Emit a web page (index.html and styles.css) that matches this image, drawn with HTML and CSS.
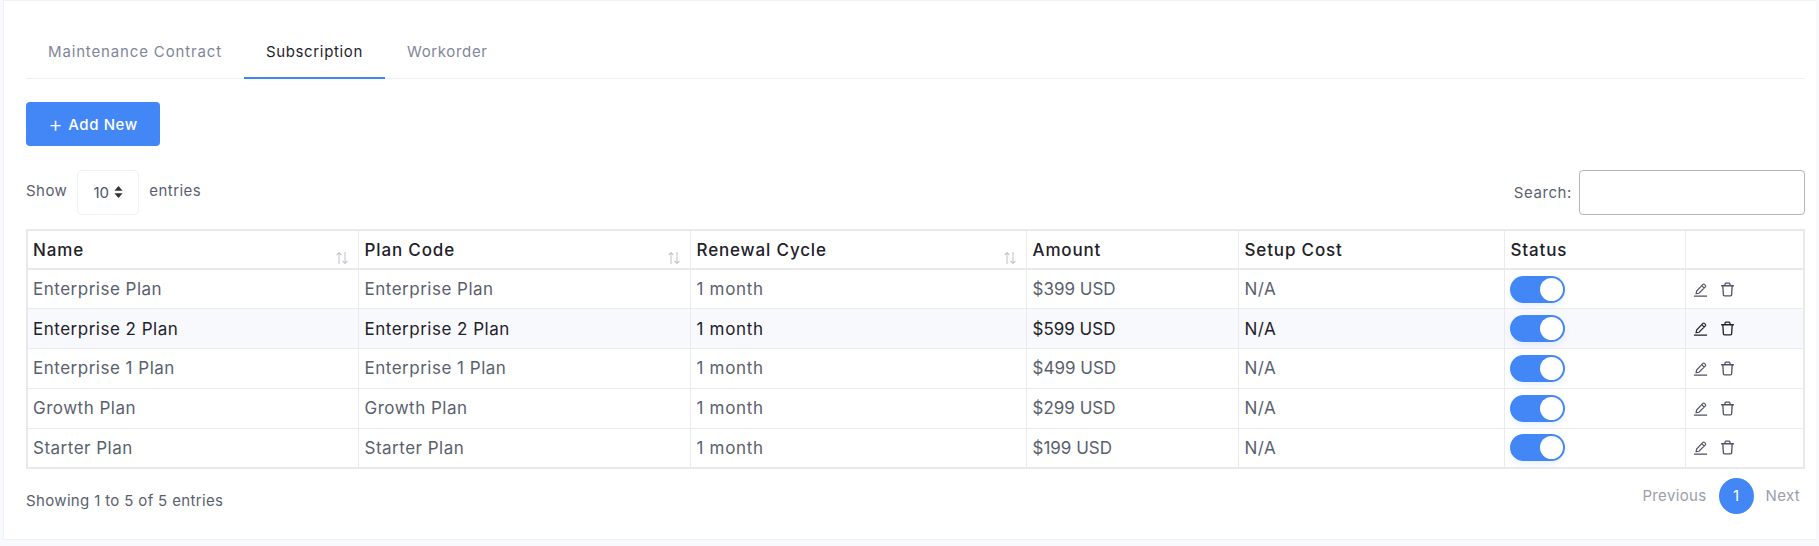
FILE: index.html
```html
<!DOCTYPE html>
<html lang="en">
<head>
<meta charset="utf-8">
<title>Subscription</title>
<link rel="stylesheet" href="styles.css">
</head>
<body>
<svg class="defs" width="0" height="0" aria-hidden="true">
  <symbol id="edit" viewBox="0 0 16 16"><path d="M1 15h14M3.2 12.6l.7-3L10.6 2.6a1.1 1.1 0 0 1 1.6 0l1 1a1.1 1.1 0 0 1 0 1.6L6.3 12l-3.1.6zM9.4 3.9l2.6 2.6" fill="none" stroke="currentColor" stroke-width="1.2" stroke-linejoin="round"/></symbol>
  <symbol id="trash" viewBox="0 0 16 16"><path d="M1.2 4h13.6M3 4l.6 9.6c0 .8.5 1.2 1.2 1.2h6.4c.7 0 1.2-.4 1.2-1.2L13 4M5 4l.6-2.2c.1-.4.4-.6.8-.6h3.2c.4 0 .7.2.8.6L11 4" fill="none" stroke="currentColor" stroke-width="1.4" stroke-linejoin="round"/></symbol>
  <symbol id="sort" viewBox="0 0 14 14"><path d="M4 13V1.5M1.6 4L4 1.5 6.4 4M10 1v11.5M7.6 10l2.4 2.5 2.4-2.5" fill="none" stroke="currentColor" stroke-width="1.1"/></symbol>
</svg>
<main class="card">
  <nav class="tabs">
    <a class="tab">Maintenance Contract</a>
    <a class="tab tab-active">Subscription</a>
    <a class="tab">Workorder</a>
  </nav>
  <button class="add-btn"><span class="plus">+</span>Add New</button>
  <div class="controls">
    <div class="length">
      <span class="length-label">Show</span>
      <span class="select">10
        <svg class="updown" viewBox="0 0 9 12"><path d="M4.5 0L8.6 4.7H.4zM4.5 12L.4 7.3h8.2z" fill="currentColor"/></svg>
      </span>
      <span class="length-label">entries</span>
    </div>
    <label class="search">Search:<input class="search-input" type="text"></label>
  </div>
  <table class="grid">
    <colgroup>
      <col class="c1"><col class="c2"><col class="c3"><col class="c4"><col class="c5"><col class="c6"><col class="c7">
    </colgroup>
    <thead>
      <tr>
        <th>Name<svg class="sort"><use href="#sort"/></svg></th>
        <th>Plan Code<svg class="sort"><use href="#sort"/></svg></th>
        <th>Renewal Cycle<svg class="sort"><use href="#sort"/></svg></th>
        <th>Amount</th>
        <th>Setup Cost</th>
        <th>Status</th>
        <th></th>
      </tr>
    </thead>
    <tbody>
      <tr>
        <td>Enterprise Plan</td><td>Enterprise Plan</td><td>1 month</td><td>$399 USD</td><td>N/A</td>
        <td><span class="toggle"></span></td>
        <td class="actions"><svg class="ic"><use href="#edit"/></svg><svg class="ic"><use href="#trash"/></svg></td>
      </tr>
      <tr class="hover">
        <td>Enterprise 2 Plan</td><td>Enterprise 2 Plan</td><td>1 month</td><td>$599 USD</td><td>N/A</td>
        <td><span class="toggle"></span></td>
        <td class="actions"><svg class="ic"><use href="#edit"/></svg><svg class="ic"><use href="#trash"/></svg></td>
      </tr>
      <tr>
        <td>Enterprise 1 Plan</td><td>Enterprise 1 Plan</td><td>1 month</td><td>$499 USD</td><td>N/A</td>
        <td><span class="toggle"></span></td>
        <td class="actions"><svg class="ic"><use href="#edit"/></svg><svg class="ic"><use href="#trash"/></svg></td>
      </tr>
      <tr>
        <td>Growth Plan</td><td>Growth Plan</td><td>1 month</td><td>$299 USD</td><td>N/A</td>
        <td><span class="toggle"></span></td>
        <td class="actions"><svg class="ic"><use href="#edit"/></svg><svg class="ic"><use href="#trash"/></svg></td>
      </tr>
      <tr>
        <td>Starter Plan</td><td>Starter Plan</td><td>1 month</td><td>$199 USD</td><td>N/A</td>
        <td><span class="toggle"></span></td>
        <td class="actions"><svg class="ic"><use href="#edit"/></svg><svg class="ic"><use href="#trash"/></svg></td>
      </tr>
    </tbody>
  </table>
  <div class="footer">
    <span class="info">Showing 1 to 5 of 5 entries</span>
    <div class="pager">
      <a class="page-link">Previous</a>
      <a class="page-num">1</a>
      <a class="page-link">Next</a>
    </div>
  </div>
</main>
</body>
</html>
```
FILE: styles.css
```css
* { box-sizing: border-box; }
html, body { margin: 0; height: 100%; }
body {
  background: #f7f9fd;
  font-family: "Inter", "Open Sans", sans-serif;
  font-size: 15px;
  letter-spacing: .6px;
  color: #5a5f6e;
  overflow: hidden;
  padding-right: 3px;
}
.defs { position: absolute; }
.card {
  margin-left: 3px;
  height: 540px;
  background: #fff;
  border: 1px solid #eef1f6;
  border-width: 1px 0 1px 1px;
  padding: 27px 11px 0 22px;
}
.tabs {
  display: flex;
  height: 51px;
  border-bottom: 1px solid #edf1f7;
}
.tab {
  padding: 14px 22px 0;
  height: 51px;
  color: #7f8699;
  letter-spacing: .85px;
}
.tab + .tab { letter-spacing: .65px; }
.tab-active {
  color: #1f2430;
  border-bottom: 2px solid #3f86f5;
}
.add-btn {
  display: flex;
  align-items: center;
  justify-content: center;
  margin-top: 23px;
  width: 134px;
  height: 44px;
  border: 0;
  border-radius: 4px;
  background: #4287f5;
  color: #fff;
  font: 500 15px "Inter", sans-serif;
  letter-spacing: .6px;
}
.plus { font-size: 22px; font-weight: 300; line-height: 1; margin-right: 5px; }
.controls {
  display: flex;
  justify-content: space-between;
  align-items: center;
  margin-top: 24px;
  height: 44px;
}
.length { display: flex; align-items: center; }
.length-label { margin-bottom: 4px; letter-spacing: .45px; }
.select {
  display: flex;
  align-items: center;
  justify-content: center;
  gap: 5px;
  width: 62px;
  height: 45px;
  margin: 0 10px;
  border: 1px solid #f0f2f7;
  border-radius: 5px;
  color: #4a5468;
  letter-spacing: 0;
}
.updown { width: 9px; height: 12px; color: #333; }
.search { display: flex; align-items: center; gap: 7px; }
.search-input {
  width: 226px;
  height: 45px;
  border: 1px solid #b5b5b5;
  border-radius: 4px;
  background: #fff;
  outline: 0;
}
.grid {
  table-layout: fixed;
  width: 1779px;
  margin-top: 15px;
  border-collapse: collapse;
  border: 2px solid #e9e9ec;
}
.c1 { width: 331px; }
.c2 { width: 332px; }
.c3 { width: 336px; }
.c4 { width: 212px; }
.c5 { width: 266px; }
.c6 { width: 181px; }
th, td {
  border: 1px solid #ebebee;
  padding: 0 6px;
  text-align: left;
  height: 39.75px;
  font-size: 17px;
}
th:first-child, td:first-child { padding-left: 5px; }
th {
  position: relative;
  height: 39px;
  border-bottom: 2px solid #e9e9ec;
  color: #1e2129;
  font-weight: 500;
  letter-spacing: .85px;
}
td { letter-spacing: .5px; }
td:nth-child(3) { letter-spacing: .68px; }
td:nth-child(4) { letter-spacing: 0; }
.sort {
  position: absolute;
  right: 9px;
  bottom: 3px;
  width: 14px;
  height: 14px;
  color: #c4c8cc;
}
.hover td { background: #f8f9fd; color: #1e2129; }
.hover .ic { color: #1e2129; }
.toggle {
  display: block;
  position: relative;
  width: 55px;
  height: 27px;
  margin-left: -1px;
  border-radius: 14px;
  background: #4287f5;
  box-shadow: 0 3px 6px rgba(66, 135, 245, .12);
}
.toggle::after {
  content: "";
  position: absolute;
  top: 2px;
  right: 2px;
  width: 23px;
  height: 23px;
  border-radius: 50%;
  background: #fff;
}
.actions { padding-left: 7px; }
.ic {
  display: inline-block;
  width: 15px;
  height: 15px;
  margin-right: 12px;
  margin-bottom: 2px;
  vertical-align: middle;
  color: #4f5260;
}
.footer {
  display: flex;
  justify-content: space-between;
  align-items: center;
  height: 44px;
  margin-top: 5px;
  letter-spacing: .35px;
}
.info { padding-top: 9px; }
.pager { display: flex; align-items: center; padding-right: 5px; }
.page-link { color: #9a9eaa; }
.page-num {
  display: flex;
  align-items: center;
  justify-content: center;
  width: 35px;
  height: 36px;
  margin: 0 12px;
  border-radius: 50%;
  background: #4287f5;
  color: #fff;
  letter-spacing: 0;
}
```
